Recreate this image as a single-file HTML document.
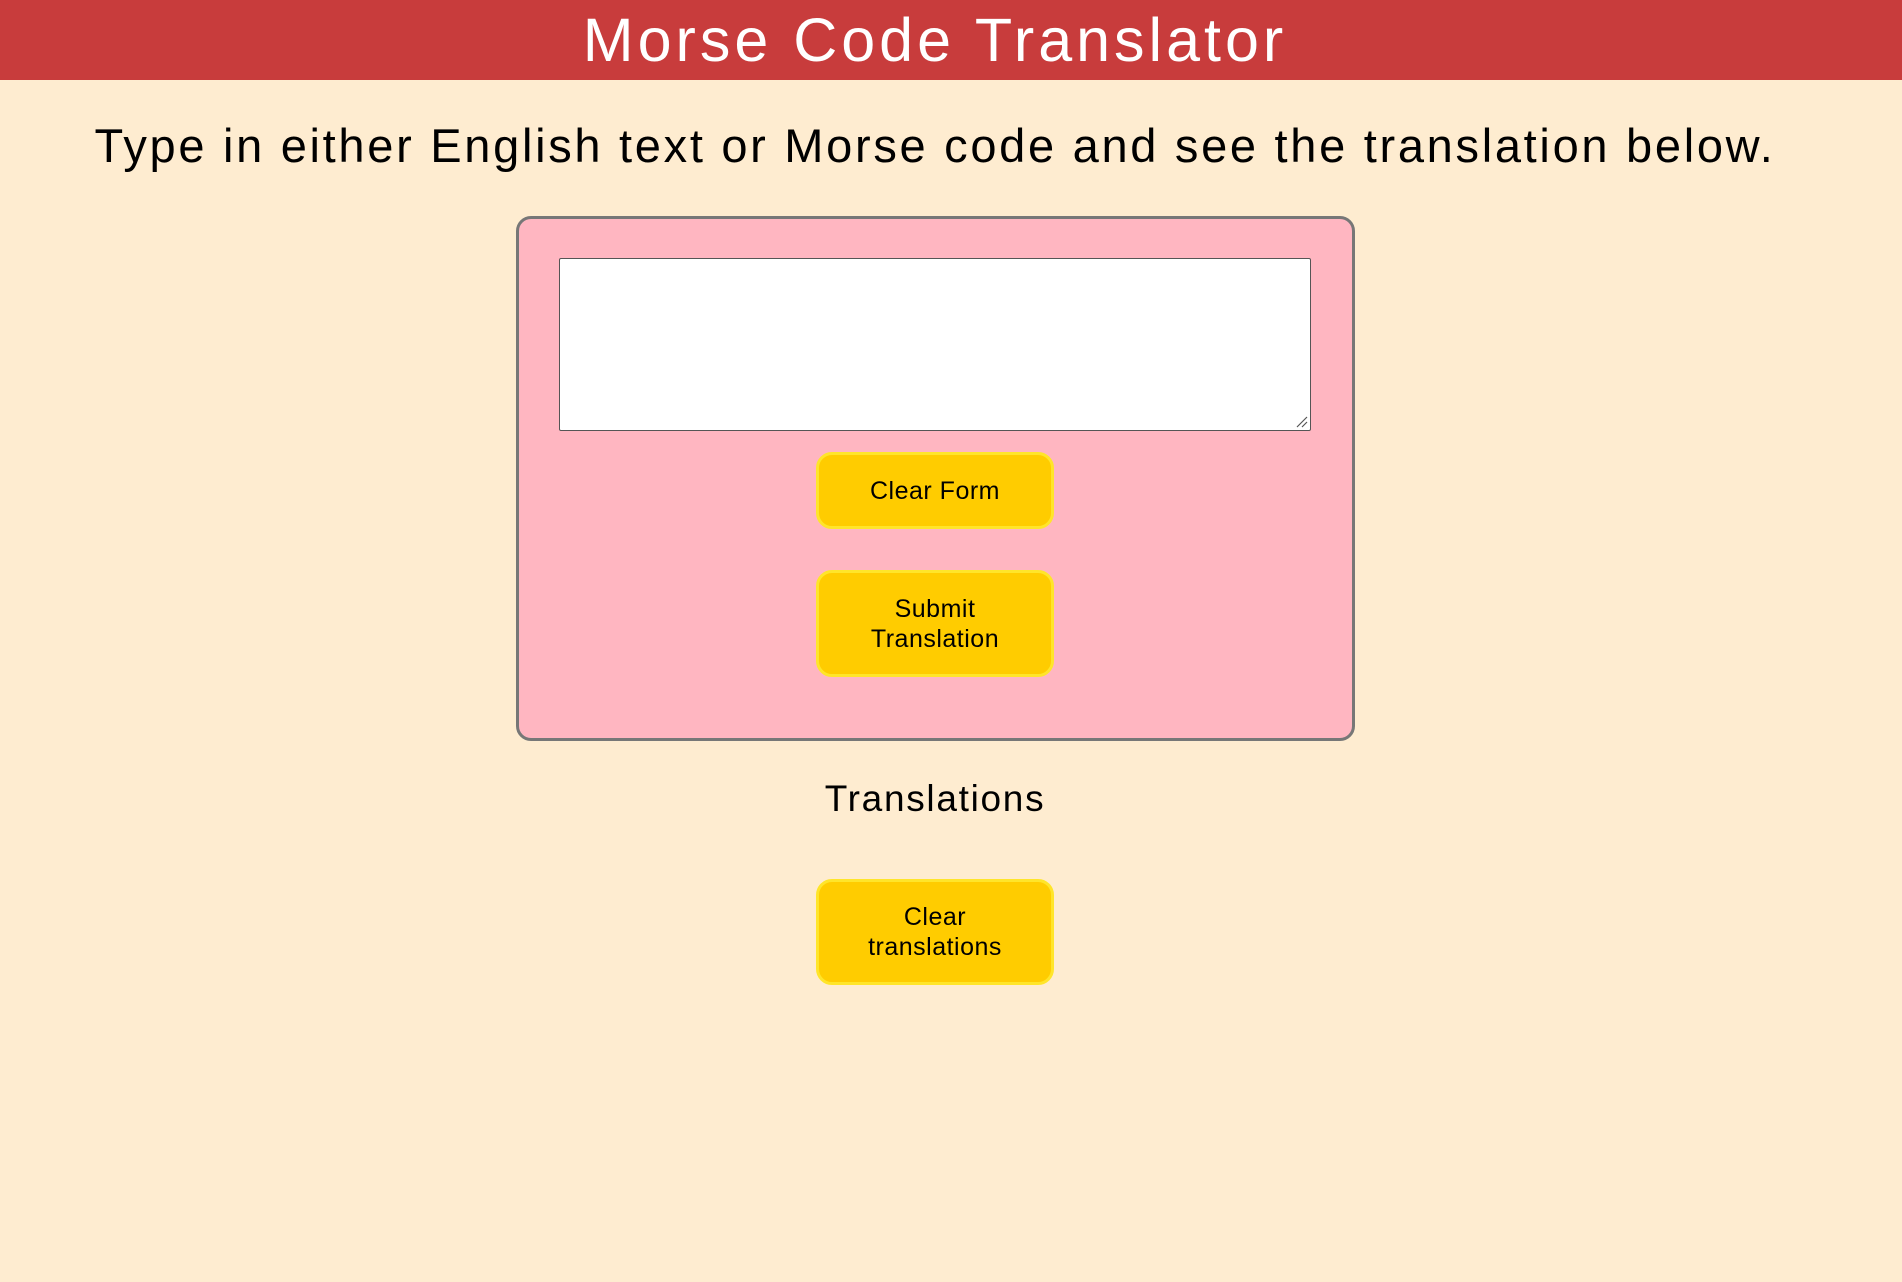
<!DOCTYPE html>
<html><head><meta charset="utf-8"><style>
*{box-sizing:border-box;margin:0;padding:0}
body{width:1902px;height:1282px;background:#feecd0;font-family:"Liberation Sans",sans-serif;position:relative;overflow:hidden}
.hdr{position:absolute;left:0;top:0;width:1902px;height:80px;background:#c83c3c}
.hdr div{width:1870px;text-align:center;color:#fff;font-size:61px;line-height:80px;letter-spacing:4px}
.sub{position:absolute;left:0;top:118px;width:1870px;text-align:center;font-size:47px;line-height:56px;color:#000;letter-spacing:2.7px}
.box{position:absolute;left:516px;top:216px;width:839px;height:525px;background:#ffb6c1;border:3px solid #777;border-radius:15px}
.ta{position:absolute;left:559px;top:258px;width:752px;height:173px;background:#fff;border:1px solid #555;border-radius:2px}
.btn{position:absolute;left:816px;width:238px;background:#ffcc00;border:3px solid #ffe52a;border-radius:16px;display:flex;align-items:center;justify-content:center;text-align:center;font-size:25px;line-height:30px;color:#000;letter-spacing:0.5px}
.tr{position:absolute;left:0;width:1870px;top:777px;text-align:center;font-size:37px;line-height:44px;letter-spacing:1.7px}
</style></head><body>
<div class="hdr"><div>Morse Code Translator</div></div>
<div class="sub">Type in either English text or Morse code and see the translation below.</div>
<div class="box"></div>
<div class="ta"><svg style="position:absolute;right:2px;bottom:2px" width="14" height="14"><path d="M3 13L13 3M8 13L13 8" stroke="#555" stroke-width="1.2"/></svg></div>
<div class="btn" style="top:452px;height:77px">Clear Form</div>
<div class="btn" style="top:570px;height:107px">Submit<br>Translation</div>
<div class="tr">Translations</div>
<div class="btn" style="top:879px;height:106px">Clear<br>translations</div>
</body></html>
